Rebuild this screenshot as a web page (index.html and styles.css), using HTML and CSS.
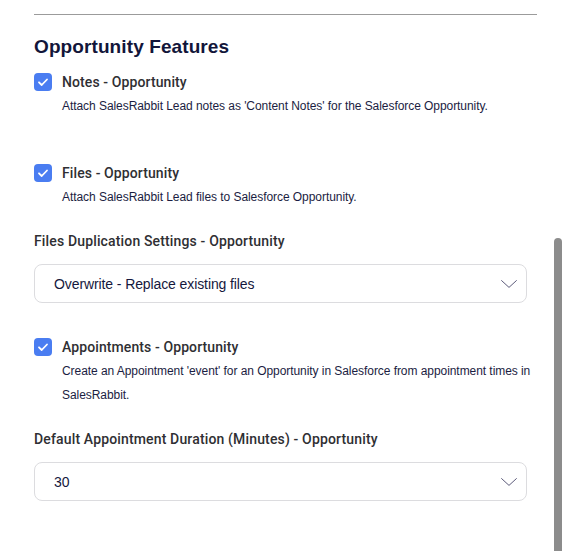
FILE: index.html
```html
<!DOCTYPE html>
<html>
<head>
<meta charset="utf-8">
<link rel="stylesheet" href="styles.css">
</head>
<body>
<div class="panel">
  <hr class="divider">
  <h2 class="title">Opportunity Features</h2>

  <div class="feature">
    <div class="check-row">
      <span class="checkbox"><svg viewBox="0 0 18 18" width="18" height="18"><path d="M5 9.3l2.7 2.7L13 6.5" fill="none" stroke="#fff" stroke-width="1.8" stroke-linecap="round" stroke-linejoin="round"/></svg></span>
      <span class="check-label">Notes - Opportunity</span>
    </div>
    <p class="desc">Attach SalesRabbit Lead notes as 'Content Notes' for the Salesforce Opportunity.</p>
  </div>

  <div class="feature gap-lg">
    <div class="check-row">
      <span class="checkbox"><svg viewBox="0 0 18 18" width="18" height="18"><path d="M5 9.3l2.7 2.7L13 6.5" fill="none" stroke="#fff" stroke-width="1.8" stroke-linecap="round" stroke-linejoin="round"/></svg></span>
      <span class="check-label">Files - Opportunity</span>
    </div>
    <p class="desc">Attach SalesRabbit Lead files to Salesforce Opportunity.</p>
  </div>

  <div class="field">
    <label class="field-label">Files Duplication Settings - Opportunity</label>
    <div class="select">
      <span class="select-value">Overwrite - Replace existing files</span>
      <svg class="chevron" viewBox="0 0 16 8" width="16" height="8"><path d="M0.6 0.6L8 7.4 15.4 0.6" fill="none" stroke="#5c5b7a" stroke-width="1" stroke-linecap="round" stroke-linejoin="round"/></svg>
    </div>
  </div>

  <div class="feature gap-md">
    <div class="check-row">
      <span class="checkbox"><svg viewBox="0 0 18 18" width="18" height="18"><path d="M5 9.3l2.7 2.7L13 6.5" fill="none" stroke="#fff" stroke-width="1.8" stroke-linecap="round" stroke-linejoin="round"/></svg></span>
      <span class="check-label">Appointments - Opportunity</span>
    </div>
    <p class="desc">Create an Appointment 'event' for an Opportunity in Salesforce from appointment times in SalesRabbit.</p>
  </div>

  <div class="field">
    <label class="field-label">Default Appointment Duration (Minutes) - Opportunity</label>
    <div class="select">
      <span class="select-value">30</span>
      <svg class="chevron" viewBox="0 0 16 8" width="16" height="8"><path d="M0.6 0.6L8 7.4 15.4 0.6" fill="none" stroke="#5c5b7a" stroke-width="1" stroke-linecap="round" stroke-linejoin="round"/></svg>
    </div>
  </div>
</div>
<div class="scrollbar"></div>
</body>
</html>
```

FILE: styles.css
```css
html, body {
  margin: 0;
  padding: 0;
  background: #ffffff;
  height: 100%;
  overflow: hidden;
}
body {
  font-family: "Liberation Sans", Arial, sans-serif;
  position: relative;
}
.panel {
  width: 503px;
  padding: 14px 0 0 34px;
  display: flex;
  flex-direction: column;
}
.divider {
  margin: 0;
  border: 0;
  border-top: 1px solid #9b9b9b;
  height: 0;
  width: 503px;
}
.title {
  margin: 20px 0 0;
  font-size: 19px;
  line-height: 24px;
  font-weight: 700;
  color: #12153a;
  letter-spacing: 0.1px;
}
.feature {
  margin-top: 14px;
  display: flex;
  flex-direction: column;
}
.feature.gap-lg { margin-top: 46px; }
.feature.gap-md { margin-top: 35px; }
.check-row {
  display: flex;
  align-items: center;
  gap: 10px;
  height: 18px;
}
.checkbox {
  width: 18px;
  height: 18px;
  border-radius: 4px;
  background: #4a7df1;
  display: flex;
}
.check-label {
  font-family: Roboto, "Liberation Sans", sans-serif;
  font-size: 14px;
  line-height: 18px;
  font-weight: 500;
  color: #2f2f33;
  letter-spacing: 0.1px;
}
.desc {
  margin: 3px 0 0 28px;
  font-size: 12px;
  line-height: 24px;
  color: #1b1d42;
  letter-spacing: -0.06px;
  max-width: 475px;
}
.field {
  margin-top: 22px;
  display: flex;
  flex-direction: column;
}
.field-label {
  font-family: Roboto, "Liberation Sans", sans-serif;
  font-size: 14px;
  line-height: 20px;
  font-weight: 500;
  color: #2f2f33;
  letter-spacing: 0.15px;
}
.select {
  margin-top: 13px;
  width: 493px;
  height: 39px;
  box-sizing: border-box;
  border: 1px solid #dcdcdf;
  border-radius: 8px;
  display: flex;
  align-items: center;
  justify-content: space-between;
  padding: 0 9px 0 19px;
}
.select-value {
  font-size: 14px;
  color: #15183d;
  letter-spacing: -0.1px;
}
.chevron {
  display: block;
}
.scrollbar {
  position: absolute;
  left: 554px;
  top: 238px;
  width: 8px;
  bottom: -10px;
  border-radius: 4px;
  background: #8c8c8c;
}
```
